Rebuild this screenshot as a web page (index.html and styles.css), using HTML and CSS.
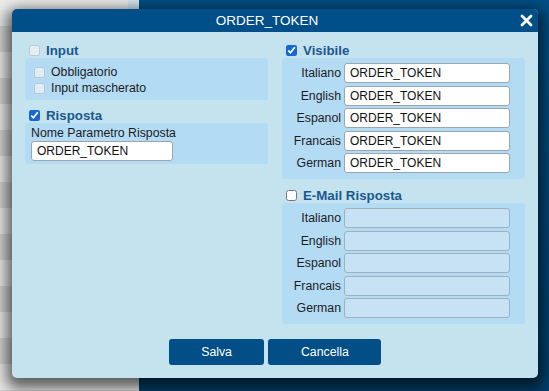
FILE: index.html
```html
<!DOCTYPE html>
<html lang="it">

<head>
    <meta charset="UTF-8">
    <meta name="viewport" content="width=device-width, initial-scale=1.0">
    <title>ORDER_TOKEN</title>
    <link rel="stylesheet" href="styles.css">
</head>

<body>

    <div class="page">
        <div class="sidebar">
            <div class="sidebar-top"><span class="sidebar-tab"></span></div>
        </div>
        <div class="main"></div>
    </div>

    <div class="dialog">
        <div class="dialog-header">
            <span class="dialog-title">ORDER_TOKEN</span>
            <button class="dialog-close" title="Chiudi">
                <svg width="13" height="13" viewBox="0 0 13 13">
                    <path d="M2 2 L11 11 M11 2 L2 11" stroke="#fff" stroke-width="2.8" stroke-linecap="round" />
                </svg>
            </button>
        </div>

        <div class="dialog-body">
            <div class="col">
                <div class="section">
                    <label class="section-head">
                        <input type="checkbox" disabled> Input
                    </label>
                    <div class="panel panel-checks">
                        <label class="check-row"><input type="checkbox" disabled> Obbligatorio</label>
                        <label class="check-row"><input type="checkbox" disabled> Input mascherato</label>
                    </div>
                </div>

                <div class="section">
                    <label class="section-head">
                        <input type="checkbox" checked> Risposta
                    </label>
                    <div class="panel panel-param">
                        <div class="param-label">Nome Parametro Risposta</div>
                        <input type="text" class="field param-field" value="ORDER_TOKEN">
                    </div>
                </div>
            </div>

            <div class="col">
                <div class="section">
                    <label class="section-head">
                        <input type="checkbox" checked> Visibile
                    </label>
                    <div class="panel panel-langs">
                        <label class="lang-label">Italiano</label>
                        <input type="text" class="field" value="ORDER_TOKEN">
                        <label class="lang-label">English</label>
                        <input type="text" class="field" value="ORDER_TOKEN">
                        <label class="lang-label">Espanol</label>
                        <input type="text" class="field" value="ORDER_TOKEN">
                        <label class="lang-label">Francais</label>
                        <input type="text" class="field" value="ORDER_TOKEN">
                        <label class="lang-label">German</label>
                        <input type="text" class="field" value="ORDER_TOKEN">
                    </div>
                </div>

                <div class="section section-mail">
                    <label class="section-head">
                        <input type="checkbox"> E-Mail Risposta
                    </label>
                    <div class="panel panel-langs">
                        <label class="lang-label">Italiano</label>
                        <input type="text" class="field" disabled>
                        <label class="lang-label">English</label>
                        <input type="text" class="field" disabled>
                        <label class="lang-label">Espanol</label>
                        <input type="text" class="field" disabled>
                        <label class="lang-label">Francais</label>
                        <input type="text" class="field" disabled>
                        <label class="lang-label">German</label>
                        <input type="text" class="field" disabled>
                    </div>
                </div>
            </div>
        </div>

        <div class="dialog-footer">
            <button class="btn">Salva</button>
            <button class="btn">Cancella</button>
        </div>
    </div>

</body>

</html>
```

FILE: styles.css
```css
body {
    margin: 0;
    font-family: 'Liberation Sans', Arial, sans-serif;
    color: #1c1c1c;
    overflow: hidden;
}

/* page behind the dialog */
.page {
    display: flex;
    height: 100vh;
}

.sidebar {
    width: 139px;
    background: repeating-linear-gradient(180deg, #e6e6e6 0 26px, #d0d0d0 26px 52px);
}

.sidebar-top {
    display: flex;
    justify-content: flex-end;
    height: 10px;
    margin-right: -6px;
    background-color: #ececec;
}

.sidebar-tab {
    width: 17px;
    background-color: #d6e6ef;
}

.main {
    flex: 1;
    background: linear-gradient(180deg, #024f86, #023e69);
}

/* dialog */
.dialog {
    position: absolute;
    left: 12px;
    top: 9px;
    width: 526px;
    height: 369px;
    box-sizing: border-box;
    background-color: #c5e3ef;
    border-radius: 5px;
    box-shadow: 0 5px 14px 5px rgba(0, 0, 0, 0.6);
}

.dialog-header {
    display: flex;
    align-items: center;
    height: 23px;
    padding: 0 5px 0 2px;
    background-color: #014f88;
    border-radius: 5px 5px 0 0;
}

.dialog-title {
    flex: 1;
    text-align: center;
    color: #fff;
    font-size: 13.5px;
}

.dialog-close {
    display: flex;
    width: 13px;
    height: 13px;
    padding: 0;
    border: none;
    background: none;
    cursor: pointer;
}

.dialog-body {
    display: grid;
    grid-template-columns: 243px 243px;
    column-gap: 14px;
    padding: 10px 13px 0;
}

.section + .section {
    margin-top: 7px;
}

.section-mail {
    margin-top: 8px !important;
}

.section-head {
    display: flex;
    align-items: center;
    gap: 6px;
    height: 16px;
    padding-left: 4px;
    font-size: 13.3px;
    font-weight: bold;
    color: #1a5891;
}

input[type="checkbox"] {
    width: 11px;
    height: 11px;
    margin: 0;
    accent-color: #1668d0;
}

.panel {
    background-color: #b4dbf4;
    border-radius: 3px;
}

.panel-checks {
    padding: 6px 9px 4px;
}

.check-row {
    display: flex;
    align-items: center;
    gap: 6px;
    height: 16px;
    font-size: 12.3px;
}

.panel-param {
    padding: 3px 6px 3px;
}

.param-label {
    height: 15px;
    font-size: 12.3px;
    line-height: 14px;
}

.field {
    box-sizing: border-box;
    height: 20px;
    padding: 0 5px;
    border: 1px solid #9ba6ae;
    border-radius: 3px;
    background-color: #fff;
    font-family: 'Liberation Sans', Arial, sans-serif;
    font-size: 12px;
    color: #111;
}

.field:disabled {
    background-color: #c7e2f5;
    border-color: #9fb1bf;
}

.param-field {
    width: 142px;
}

.panel-langs {
    display: grid;
    grid-template-columns: 54px 166px;
    column-gap: 3px;
    row-gap: 2.5px;
    align-items: center;
    padding: 5px 5px 6px;
}

.panel-langs .field {
    width: 166px;
}

.lang-label {
    text-align: right;
    font-size: 12.3px;
}

.dialog-footer {
    display: flex;
    justify-content: center;
    gap: 4px;
    padding-top: 15px;
}

.btn {
    height: 26px;
    padding: 0 32.5px;
    border: none;
    border-radius: 3px;
    background-color: #024f87;
    color: #fff;
    font-family: 'Liberation Sans', Arial, sans-serif;
    font-size: 12.3px;
    cursor: pointer;
}
```
